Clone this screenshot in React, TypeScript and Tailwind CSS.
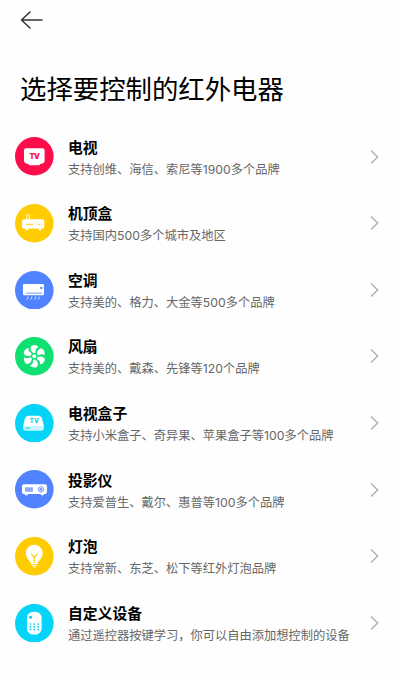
import type { ReactNode } from 'react';

interface Device {
  name: string;
  description: string;
  color: string;
  icon: ReactNode;
}

const FAN_ANGLES = [0, 60, 120, 180, 240, 300];
const REMOTE_ROWS = [2, 11, 19];
const REMOTE_COLS = [-12, 0, 12];

// Icons are drawn around the centre of a 116 unit circle
const DEVICES: Device[] = [
  {
    name: '电视',
    description: '支持创维、海信、索尼等1900多个品牌',
    color: '#ff0c4a',
    icon: (
      <>
        <path d="M-25 -24H25Q31 -24 31 -18V13Q31 21 23 22L18 23L15 27H-15L-18 23L-23 22Q-31 21 -31 13V-18Q-31 -24 -25 -24Z" fill="white" />
        <text x="0" y="8" textAnchor="middle" fontSize="22" fontWeight="900" letterSpacing="-2" fill="#ff0c4a">
          TV
        </text>
      </>
    ),
  },
  {
    name: '机顶盒',
    description: '支持国内500多个城市及地区',
    color: '#ffcc00',
    icon: (
      <>
        <path d="M-22 -28V-10M-15 -28V-10" stroke="white" strokeOpacity="0.8" strokeWidth="3.500" />
        <rect x="-37" y="-12" width="67" height="28" rx="5" fill="white" />
        <path d="M-28 15H-17L-19 21H-26ZM12 15H23L21 21H14Z" fill="white" />
        <path d="M-25 3H-4M11 3H17M20 3H23" stroke="#ffcc00" strokeWidth="3" />
      </>
    ),
  },
  {
    name: '空调',
    description: '支持美的、格力、大金等500多个品牌',
    color: '#5182ff',
    icon: (
      <>
        <rect x="-34" y="-19" width="63" height="34" rx="4" fill="white" />
        <circle cx="21" cy="-7" r="3.500" fill="#5182ff" />
        <path d="M-25 8.500H24" stroke="#5182ff" strokeWidth="2.500" />
        <path d="M-18 19L-22 28M-7 19L-11 28M5 19L1 28M16 19L12 28" stroke="white" strokeOpacity="0.8" strokeWidth="3" />
      </>
    ),
  },
  {
    name: '风扇',
    description: '支持美的、戴森、先锋等120个品牌',
    color: '#0fe072',
    icon: (
      <>
        {FAN_ANGLES.map((angle) => (
          <path
            key={angle}
            d="M-3 -10C-11 -16 -14 -26 -8 -32C-1 -36 9 -33 13 -27C6 -26 3 -20 4 -11Z"
            fill="white"
            transform={`rotate(${angle})`}
          />
        ))}
        <circle r="6" fill="white" />
      </>
    ),
  },
  {
    name: '电视盒子',
    description: '支持小米盒子、奇异果、苹果盒子等100多个品牌',
    color: '#05d3f8',
    icon: (
      <>
        <path d="M-18 -23H13Q20 -23 23 -15L28 5V16Q28 22 22 22H-27Q-33 22 -33 16V5L-28 -15Q-25 -23 -18 -23Z" fill="white" />
        <path d="M-32 8H27V16Q27 21 22 21H-27Q-32 21 -32 16Z" fill="#c9f6fe" />
        <path d="M-26 14.500H-12" stroke="#05d3f8" strokeWidth="3" />
        <text x="1" y="0" textAnchor="middle" fontSize="17" fontWeight="900" letterSpacing="2" fill="#05d3f8">
          TV
        </text>
      </>
    ),
  },
  {
    name: '投影仪',
    description: '支持爱普生、戴尔、惠普等100多个品牌',
    color: '#5182ff',
    icon: (
      <>
        <rect x="-37" y="-15" width="75" height="29" rx="6" fill="white" />
        <path d="M-29 13H-19L-20 18H-28ZM19 13H29L28 18H20Z" fill="white" />
        <path d="M-25 -6V7M-19 -6V7M-13 -6V7M-7 -6V7" stroke="#5182ff" strokeWidth="4" />
        <circle cx="20" cy="0" r="8" fill="none" stroke="#5182ff" strokeWidth="2.500" />
        <circle cx="20" cy="0" r="4.500" fill="#5182ff" fillOpacity="0.8" />
      </>
    ),
  },
  {
    name: '灯泡',
    description: '支持常新、东芝、松下等红外灯泡品牌',
    color: '#ffcc00',
    icon: (
      <>
        <path d="M-9 24C-9 15 -25 9 -25 -10A25 25 0 0 1 25 -10C25 9 9 15 9 24Z" fill="white" />
        <path d="M-10 -8L0 3L10 -8M0 3V20" fill="none" stroke="#ffcc00" strokeWidth="3.500" />
        <path d="M-8 27.500H8M-5 32H5" stroke="white" strokeWidth="2.500" />
      </>
    ),
  },
  {
    name: '自定义设备',
    description: '通过遥控器按键学习，你可以自由添加想控制的设备',
    color: '#05d3f8',
    icon: (
      <>
        <rect x="-22" y="-35" width="44" height="69" rx="19" fill="white" />
        <circle cx="-11" cy="-18" r="4.500" fill="#05d3f8" />
        {REMOTE_ROWS.map((y) =>
          REMOTE_COLS.map((x) => (
            <rect key={`${x},${y}`} x={x - 2.5} y={y - 2.5} width="5" height="5" rx="1.500" fill="#05d3f8" />
          )),
        )}
      </>
    ),
  },
];

function DeviceRow({ name, description, color, icon }: Device) {
  return (
    <li className="flex h-[66.6px] items-center pl-[15px] pr-[21px]">
      <svg viewBox="-58 -58 116 116" className="size-[38.6px] shrink-0">
        <circle r="58" fill={color} />
        {icon}
      </svg>
      <div className="ml-[14.4px] min-w-0 flex-1 pt-[3px] whitespace-nowrap">
        <h2 className="text-[14.8px] leading-[22px] font-bold text-black">{name}</h2>
        <p className="text-[12.25px] leading-[21px] text-[#666666]">{description}</p>
      </div>
      <svg viewBox="0 0 9 16" className="h-4 w-[9px] shrink-0" fill="none" stroke="#adadad" strokeWidth="1.300">
        <path d="M1 1.500L7.700 8L1 14.500" />
      </svg>
    </li>
  );
}

export default function App() {
  return (
    <main className="h-[677px] w-[400px] overflow-hidden bg-[#fefefe] font-[Inter,'Noto_Sans_CJK_SC',sans-serif]">
      <header className="flex h-10 items-center pl-5">
        <svg viewBox="0 0 24 20" className="h-5 w-6" fill="none" stroke="#333333" strokeWidth="1.500" strokeLinecap="round" strokeLinejoin="round">
          <path d="M10 2L1.500 10L10 18M1.500 10H22" />
        </svg>
      </header>
      <h1 className="mt-[30px] pl-5 text-[26.4px] leading-[38px] whitespace-nowrap text-black">选择要控制的红外电器</h1>
      <ul className="mt-[15.4px]">
        {DEVICES.map((device) => (
          <DeviceRow key={device.name} {...device} />
        ))}
      </ul>
    </main>
  );
}
